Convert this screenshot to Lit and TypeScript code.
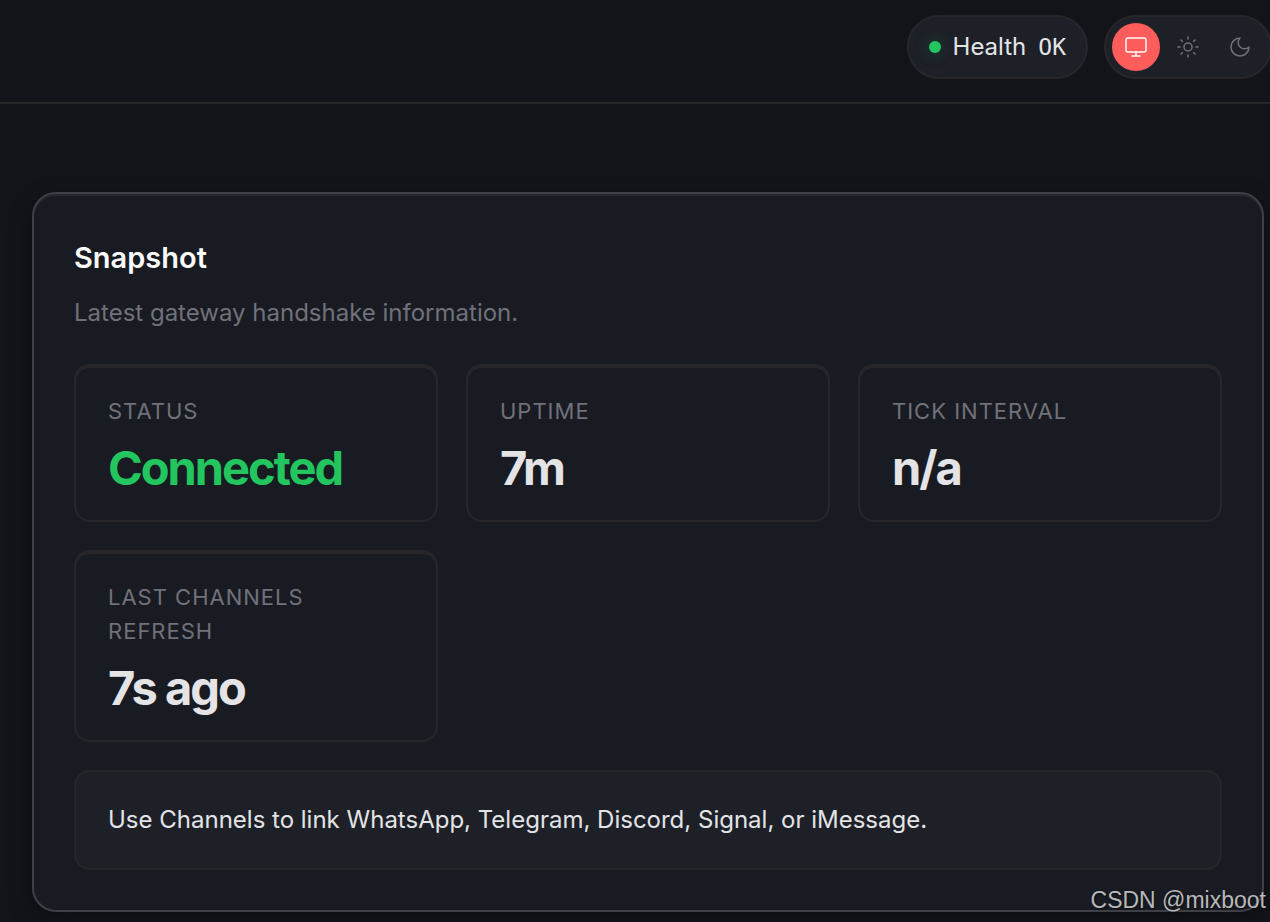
import { LitElement, css, html, svg } from "lit";
import { customElement, property, state } from "lit/decorators.js";
import { classMap } from "lit/directives/class-map.js";

type Theme = "system" | "light" | "dark";

const icons = {
  system: svg`<rect x="2" y="3" width="20" height="14" rx="2"></rect><path d="M8 21h8M12 17v4"></path>`,
  light: svg`<circle cx="12" cy="12" r="4"></circle><path d="M12 2v2M12 20v2M4.93 4.93l1.41 1.41M17.66 17.66l1.41 1.41M2 12h2M20 12h2M6.34 17.66l-1.41 1.41M19.07 4.93l-1.41 1.41"></path>`,
  dark: svg`<path d="M12 3a6 6 0 0 0 9 9 9 9 0 1 1-9-9Z"></path>`,
};

@customElement("theme-toggle")
export class ThemeToggle extends LitElement {
  @state() private theme: Theme = "system";

  static styles = css`
    :host { display: block; }
    .toggle {
      display: flex;
      gap: 4px;
      padding: 6px;
      border: 2px solid #27272a;
      border-radius: 32px;
      background: #1d2027;
    }
    .option {
      display: grid;
      place-items: center;
      width: 48px;
      height: 48px;
      padding: 0;
      border: 0;
      border-radius: 50%;
      background: transparent;
      color: #71717a;
      cursor: pointer;
    }
    .option.active { background: #ff5c5c; color: #fafafa; }
    .icon {
      width: 24px;
      height: 24px;
      fill: none;
      stroke: currentColor;
      stroke-width: 1.5;
      stroke-linecap: round;
      stroke-linejoin: round;
    }
  `;

  render() {
    const themes: Theme[] = ["system", "light", "dark"];
    return html`<div class="toggle" role="group" aria-label="Theme">
      ${themes.map(
        (t) => html`<button
          type="button"
          class=${classMap({ option: true, active: t === this.theme })}
          aria-label=${t}
          aria-pressed=${t === this.theme}
          @click=${() => (this.theme = t)}
        ><svg class="icon" viewBox="0 0 24 24" aria-hidden="true">${icons[t]}</svg></button>`
      )}
    </div>`;
  }
}

interface Stat { label: string; value: string; ok?: boolean; }

@customElement("snapshot-card")
export class SnapshotCard extends LitElement {
  @property({ attribute: false }) stats: Stat[] = [];

  static styles = css`
    :host { display: block; }
    .card {
      padding: 40px;
      border: 2px solid #3f3f46;
      border-radius: 24px;
      background: #181b22;
      box-shadow: 0 8px 24px rgba(0, 0, 0, 0.3), inset 0 2px 0 rgba(255, 255, 255, 0.06);
    }
    .title {
      margin: 0;
      font-size: 29px;
      line-height: 48px;
      font-weight: 600;
      color: #fafafa;
    }
    .sub {
      margin: 10px 0 0;
      line-height: 42px;
      color: #71717a;
    }
    .stats {
      display: grid;
      grid-template-columns: repeat(3, minmax(0, 1fr));
      align-items: start;
      gap: 28px;
      margin: 30px 0 28px;
    }
    .stat {
      padding: 28px 32px;
      border: 2px solid #27272a;
      border-radius: 16px;
      box-shadow: inset 0 2px 0 #27272a;
    }
    .label {
      font-size: 22px;
      line-height: 34px;
      letter-spacing: 1px;
      text-transform: uppercase;
      color: #71717a;
    }
    .value {
      margin: 16px 0 0;
      font-size: 47px;
      line-height: 48px;
      font-weight: 700;
      letter-spacing: -2px;
      color: #e4e4e7;
    }
    .value.ok { color: #22c55e; }
    .callout {
      margin: 0;
      padding: 28px 32px;
      border: 2px solid #27272a;
      border-radius: 16px;
      background: #1d2027;
      line-height: 40px;
    }
  `;

  render() {
    return html`<section class="card" aria-labelledby="title">
      <h2 class="title" id="title">Snapshot</h2>
      <p class="sub">Latest gateway handshake information.</p>
      <dl class="stats">
        ${this.stats.map(
          (s) => html`<div class="stat">
            <dt class="label">${s.label}</dt>
            <dd class=${classMap({ value: true, ok: !!s.ok })}>${s.value}</dd>
          </div>`
        )}
      </dl>
      <p class="callout">Use Channels to link WhatsApp, Telegram, Discord, Signal, or iMessage.</p>
    </section>`;
  }
}

@customElement("app-root")
export class AppRoot extends LitElement {
  private stats: Stat[] = [
    { label: "Status", value: "Connected", ok: true },
    { label: "Uptime", value: "7m" },
    { label: "Tick interval", value: "n/a" },
    { label: "Last channels refresh", value: "7s ago" },
  ];

  static styles = css`
    :host {
      display: block;
      position: relative;
      min-height: 100vh;
      overflow: hidden;
      background: #12141a;
      color: #e4e4e7;
      font-family: Inter, sans-serif;
      font-size: 24px;
    }
    .topbar {
      display: flex;
      justify-content: flex-end;
      align-items: center;
      gap: 16px;
      padding: 15px 0 23px;
      margin-right: -2px;
      border-bottom: 2px solid #27272a;
    }
    .health {
      display: flex;
      align-items: center;
      gap: 12px;
      padding: 10px 20px;
      border: 2px solid #27272a;
      border-radius: 32px;
      background: #1d2027;
      line-height: 40px;
    }
    .dot {
      width: 12px;
      height: 12px;
      border-radius: 50%;
      background: #22c55e;
      box-shadow: 0 0 16px rgba(34, 197, 94, 0.3);
    }
    .mono { font-family: "DejaVu Sans Mono", monospace; font-size: 23px; }
    .content { padding: 88px 6px 10px 32px; }
    .watermark {
      position: absolute;
      right: 4px;
      bottom: 8px;
      font-family: "Liberation Sans", sans-serif;
      font-size: 23px;
      line-height: 28px;
      color: #b8b8ba;
      text-shadow: 1px 1px 2px rgba(0, 0, 0, 0.5);
    }
  `;

  render() {
    return html`
      <header class="topbar">
        <div class="health" role="status">
          <span class="dot"></span>
          <span>Health</span>
          <span class="mono">OK</span>
        </div>
        <theme-toggle></theme-toggle>
      </header>
      <main class="content">
        <snapshot-card .stats=${this.stats}></snapshot-card>
      </main>
      <div class="watermark">CSDN @mixboot</div>
    `;
  }
}
